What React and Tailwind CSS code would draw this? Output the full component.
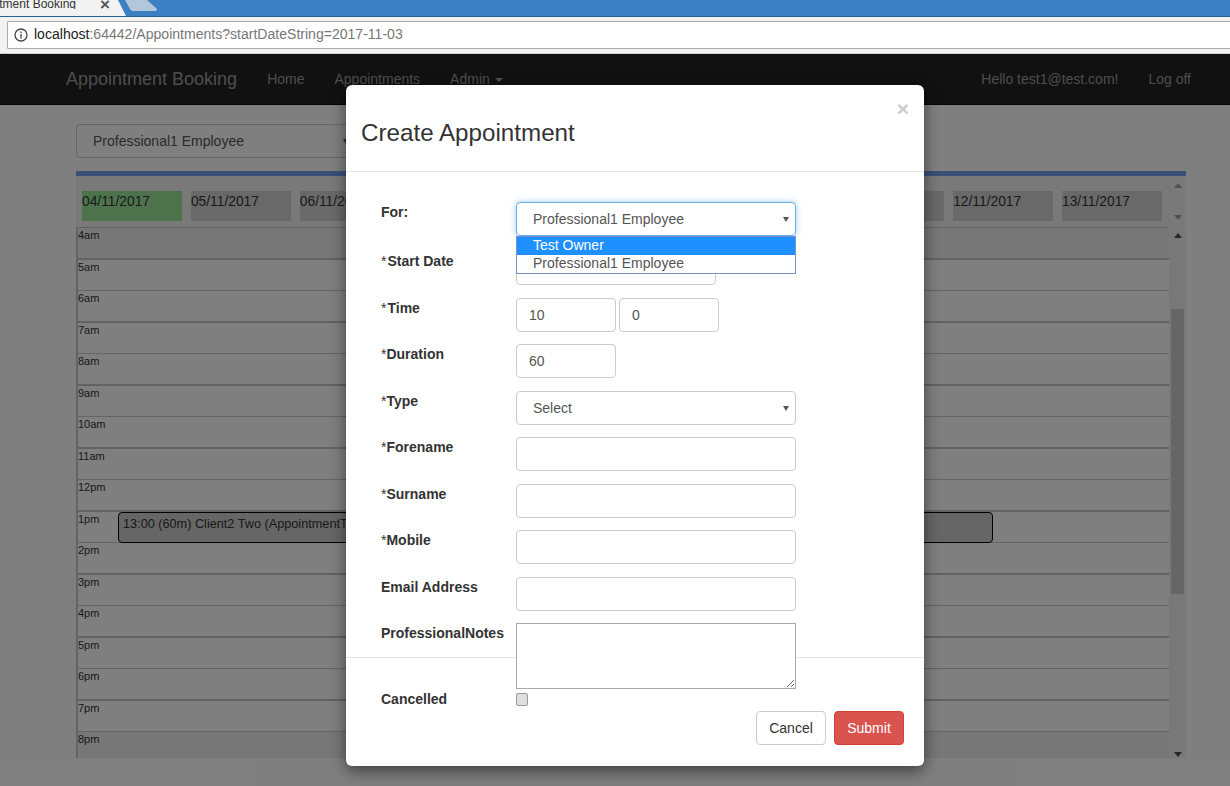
const hours = ['4am','5am','6am','7am','8am','9am','10am','11am','12pm','1pm','2pm','3pm','4pm','5pm','6pm','7pm','8pm'];
const dates = ['05/11/2017','06/11/2017','07/11/2017','08/11/2017','09/11/2017','10/11/2017','11/11/2017','12/11/2017','13/11/2017'];

function Caret({ color = '#555', size = 'w-[6px] h-[5px]' }) {
  return (
    <svg viewBox="0 0 7 5" preserveAspectRatio="none" className={size}><path d="M0 0H7L3.5 5Z" fill={color} /></svg>
  );
}

function SelectBox({ value, focus, width = 'w-[280px]' }) {
  return (
    <div className={`${width} h-[34px] shrink-0 flex items-center justify-between pl-[16px] pr-[6px] pt-[1px] rounded bg-white text-[14px] text-[#555] border ${focus ? 'border-[#66afe9] shadow-[0_0_6px_rgba(102,175,233,0.6)]' : 'border-[#ccc]'}`}>
      <span>{value}</span>
      <Caret />
    </div>
  );
}

function Input({ value = '', width = 'w-[280px]' }) {
  return (
    <input readOnly value={value} className={`${width} h-[34px] shrink-0 px-[12px] rounded bg-white text-[14px] text-[#555] border border-[#ccc] outline-none`} />
  );
}

function Row({ label, star, gap, children, className = 'mb-[12.5px]' }) {
  return (
    <div className={`flex items-start h-[34px] ${className}`}>
      <div className="w-[135px] shrink-0 text-[14px] leading-[20px] text-[#333] whitespace-nowrap">
        {star && <span className={gap ? 'mr-[1px]' : ''}>*</span>}
        <span className="font-bold">{label}</span>
      </div>
      {children}
    </div>
  );
}

function ScrollArrow({ up, color }) {
  return (
    <svg viewBox="0 0 8 5" className="w-[8px] h-[5px]">
      <path d={up ? 'M0 5H8L4 0Z' : 'M0 0H8L4 5Z'} fill={color} />
    </svg>
  );
}

function BrowserChrome() {
  return (
    <div className="h-[54px] bg-[#f2f2f2] flex flex-col">
      <div className="h-[17px] bg-[#3b80c2] border-b border-[#2a6496] relative overflow-hidden">
        <svg className="absolute left-[110px] top-0 w-[50px] h-[17px]" viewBox="0 0 50 17">
          <path d="M0 0H8L16 16H0Z" fill="#f2f2f2" />
          <path d="M15 0H37L47 9Q47 11 45 11H23Q21 11 20 9Z" fill="#b3c6da" />
        </svg>
        <div className="w-[118px] h-[16px] bg-[#f2f2f2] flex items-start overflow-hidden">
          <div className="w-[76px] shrink-0 flex justify-end overflow-hidden">
            <span className="text-[12px] leading-[9px] text-[#333] whitespace-nowrap">Appointment Booking</span>
          </div>
          <span className="ml-[24px] mt-[1px] text-[17px] leading-[8px] font-bold text-[#555]">×</span>
        </div>
      </div>
      <div className="flex-1 pt-[4px] pl-[7px] border-b border-[#d0d0d0]">
        <div className="h-[28px] bg-white border border-[#aaa] border-r-0 rounded-l-[2px] flex items-center pl-[6px] gap-[6px] text-[14.05px] whitespace-nowrap">
          <svg viewBox="0 0 14 14" className="w-[14px] h-[14px]" fill="none" stroke="#444" strokeWidth="1.300">
            <circle cx="7" cy="7" r="6" />
            <path d="M7 6V10.500M7 3.500V5" />
          </svg>
          <span><span className="text-[#222]">localhost</span><span className="text-[#777]">:64442/Appointments?startDateString=2017-11-03</span></span>
        </div>
      </div>
    </div>
  );
}

function Navbar() {
  return (
    <div className="h-[51px] bg-[#222] border-b border-[#080808] flex items-center justify-between pl-[66px] pr-[39px] text-[14px] text-[#9d9d9d]">
      <div className="flex items-center gap-[30px]">
        <span className="text-[18px]">Appointment Booking</span>
        <span>Home</span>
        <span>Appointments</span>
        <span className="flex items-center gap-[5px]">Admin <span className="mt-[1px]"><Caret color="#9d9d9d" size="w-[8px] h-[4px]" /></span></span>
      </div>
      <div className="flex items-center gap-[30px]">
        <span>Hello test1@test.com!</span>
        <span>Log off</span>
      </div>
    </div>
  );
}

function Calendar() {
  return (
    <div className="mt-[13px] ml-[76px] w-[1110px] h-[587px] flex flex-col overflow-hidden border-t-[5px] border-[#74a0ee] text-[#333]">
      <div className="h-[52px] shrink-0 flex">
        <div className="flex-1 min-w-0 border-b border-[#c4c4c4] pl-[6px] pt-[15px] flex gap-[8.9px] overflow-hidden bg-[#f3f3f3]">
          <div className="w-[100px] h-[30px] shrink-0 bg-[#9be69b] text-[13.8px] leading-[22px]">04/11/2017</div>
          {dates.map(d => (
            <div key={d} className="w-[100px] h-[30px] shrink-0 bg-[#d3d3d3] text-[13.8px] leading-[22px]">{d}</div>
          ))}
        </div>
        <div className="w-[17px] shrink-0 bg-[#f3f3f3] flex flex-col items-center justify-between pt-[7px] pb-[8px]">
          <ScrollArrow up color="#a3a3a3" />
          <ScrollArrow color="#a3a3a3" />
        </div>
      </div>
      <div className="flex-1 min-h-0 flex">
        <div className="flex-1 min-w-0 relative border-l-2 border-[#c8c8c8] overflow-hidden">
          {hours.map((h, i) => (
            <div key={h} className={`h-[31.500px] text-[11px] leading-[15px] ${i % 2 === 0 ? 'border-b-2 border-[#c4c4c4]' : 'border-b border-[#c8c8c8]'} ${i === 0 || i === 16 ? 'bg-[#eeeeee]' : 'bg-white'}`}>
              {h}
            </div>
          ))}
          <div className="absolute left-[40px] top-[284px] w-[875px] h-[31px] bg-[#cccccc] border border-black rounded-[4px] pl-[4px] text-[12.7px] leading-[22px] whitespace-nowrap overflow-hidden">
            13:00 (60m) Client2 Two (AppointmentType1)
          </div>
        </div>
        <div className="w-[17px] shrink-0 bg-[#f0f0f0] flex flex-col items-center pt-[5px] pb-[1px]">
          <ScrollArrow up color="#505050" />
          <div className="mt-[71px] w-[13px] h-[285px] bg-[#cdcdcd]" />
          <div className="flex-1" />
          <ScrollArrow color="#505050" />
        </div>
      </div>
    </div>
  );
}

function Modal() {
  return (
    <div className="absolute left-[346px] top-[31px] w-[578px] h-[681px] bg-white rounded-[6px] shadow-[0_5px_15px_rgba(0,0,0,0.5)] flex flex-col text-[#333]">
      <div className="h-[87px] shrink-0 border-b border-[#e5e5e5] pl-[15px] pr-[15px] relative">
        <span className="absolute right-[15px] top-[10px] text-[21px] leading-[28px] font-bold text-[#ccc]">×</span>
        <h3 className="pt-[34px] text-[24.2px] leading-[28px]">Create Appointment</h3>
      </div>
      <div className="h-[485px] shrink-0 relative z-10 pl-[35px] pt-[30px]">
        <Row label="For:" className="mb-[15px]">
          <div className="relative">
            <SelectBox value="Professional1 Employee" focus />
            <div className="absolute left-0 top-[34px] w-[280px] h-[38px] bg-white border border-[#7a8fc8] text-[14px] leading-[16px] z-20">
              <div className="h-[18px] pl-[16px] bg-[#1e90ff] text-white">Test Owner</div>
              <div className="h-[18px] pl-[16px] text-[#555]">Professional1 Employee</div>
            </div>
          </div>
        </Row>
        <Row label="Start Date" star gap><Input width="w-[200px]" /></Row>
        <Row label="Time" star gap>
          <div className="flex gap-[3px]">
            <Input value="10" width="w-[100px]" />
            <Input value="0" width="w-[100px]" />
          </div>
        </Row>
        <Row label="Duration" star><Input value="60" width="w-[100px]" /></Row>
        <Row label="Type" star><SelectBox value="Select" /></Row>
        <Row label="Forename" star><Input /></Row>
        <Row label="Surname" star><Input /></Row>
        <Row label="Mobile" star><Input /></Row>
        <Row label="Email Address"><Input /></Row>
        <div className="flex items-start">
          <div className="w-[135px] shrink-0 text-[14px] leading-[20px] font-bold whitespace-nowrap">ProfessionalNotes</div>
          <textarea readOnly className="w-[280px] h-[66px] resize border border-[#a9a9a9] bg-white outline-none" />
        </div>
        <div className="flex items-start mt-[4px]">
          <div className="w-[135px] shrink-0 text-[14px] leading-[13px] font-bold">Cancelled</div>
          <input type="checkbox" readOnly className="appearance-none w-[12px] h-[13px] bg-[#dedede] border border-[#999] rounded-[2px]" />
        </div>
      </div>
      <div className="flex-1 border-t border-[#e5e5e5] flex items-end justify-end gap-[8px] pr-[20px] pb-[21px]">
        <button className="w-[70px] h-[34px] bg-white border border-[#ccc] rounded text-[14px] text-[#333]">Cancel</button>
        <button className="w-[70px] h-[34px] bg-[#d9534f] border border-[#d43f3a] rounded text-[14px] text-white">Submit</button>
      </div>
    </div>
  );
}

export default function App() {
  return (
    <div className="w-[1230px] h-[786px] overflow-hidden bg-white font-['Liberation_Sans',Arial,sans-serif]">
      <BrowserChrome />
      <div className="relative h-[732px] overflow-hidden">
        <Navbar />
        <div className="pt-[19px] pl-[76px]">
          <SelectBox value="Professional1 Employee" />
        </div>
        <Calendar />
        <div className="absolute inset-0 bg-black/50" />
        <Modal />
      </div>
    </div>
  );
}
